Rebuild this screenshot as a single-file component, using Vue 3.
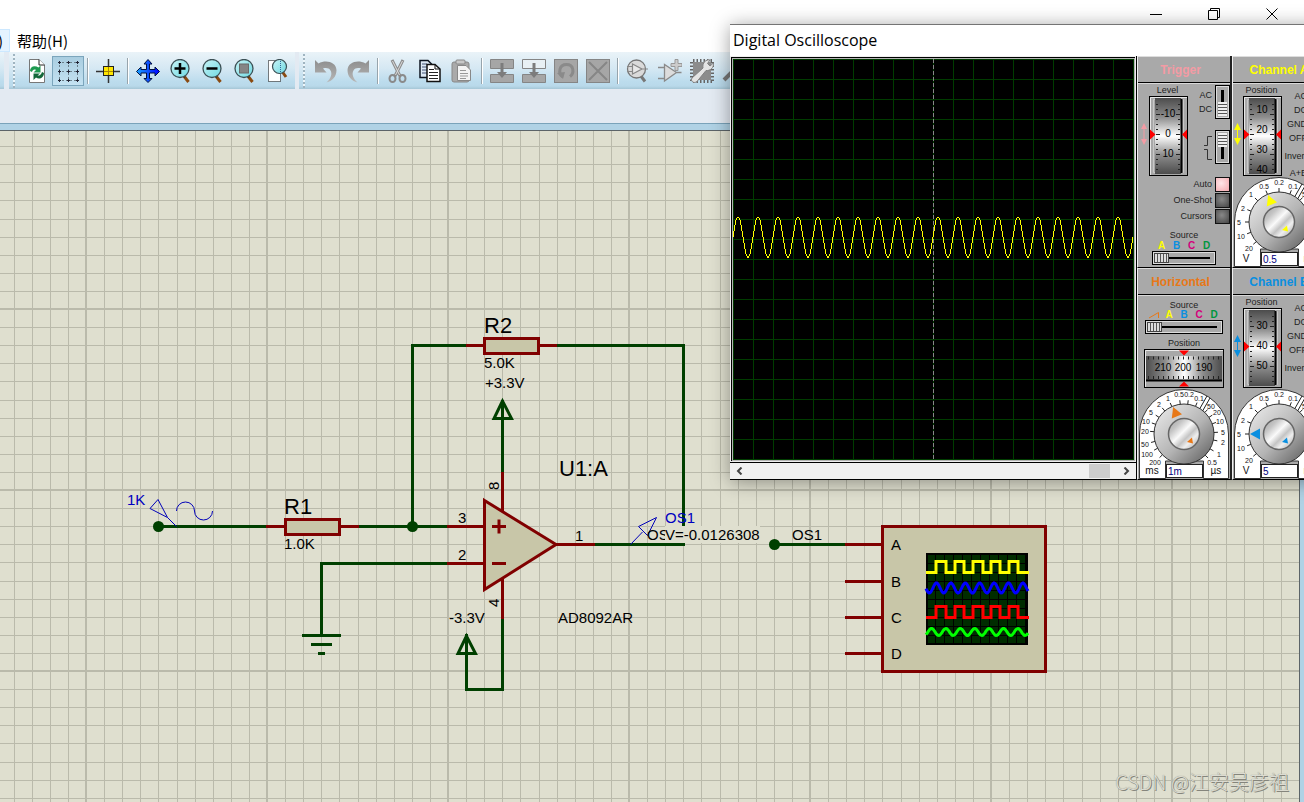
<script setup>
import { ref } from 'vue'

const minors = [19, 37, 55, 73, 92, 110, 128, 146, 164]
const scopeLines = Array.from({ length: 21 }, (_, i) => i * 20)

const wave = (() => {
  const pts = []
  for (let x = 0; x <= 400; x++) {
    pts.push(`${x},${Math.round(178 - 20.5 * Math.sin((x * Math.PI) / 10))}`)
  }
  return pts.join(' ')
})()

const square = (top, base) => {
  const edges = [936, 946, 955, 964, 973, 983, 991, 1000, 1009, 1018]
  let d = `M926 ${base}`
  edges.forEach((x, i) => {
    d += `H${x}V${i % 2 ? base : top}`
  })
  return d + 'H1029'
}
const ripple = (start, mid, amp) => {
  const pts = []
  for (let x = 926; x <= 1028; x++) {
    pts.push(`${x},${(mid - amp * Math.cos(((x - start) * 2 * Math.PI) / 14.4)).toFixed(1)}`)
  }
  return pts.join(' ')
}

const withTick = (list) =>
  list.map(([text, x, y]) => {
    const a = Math.atan2(y - 45, x - 45)
    return {
      text, x, y,
      x1: 45 + 30 * Math.cos(a), y1: 45 + 30 * Math.sin(a),
      x2: 45 + 34 * Math.cos(a), y2: 45 + 34 * Math.sin(a)
    }
  })
const timeScale = withTick([
  ['200', 16, 73], ['100', 8, 65], ['50', 6, 55], ['20', 6, 42], ['10', 7, 32], ['5', 12, 23],
  ['2', 20, 15], ['1', 29, 9], ['0.5', 40, 5], ['0.2', 50, 5], ['0.1', 60, 9], ['50', 72, 17],
  ['20', 78, 23], ['10', 81, 32], ['5', 84, 43], ['2', 84, 53], ['1', 80, 65], ['0.5', 73, 73]
])
const voltScale = withTick([
  ['20', 15, 71], ['10', 7, 59], ['5', 5, 45], ['2', 9, 31], ['1', 17, 17], ['0.5', 30, 9],
  ['0.2', 45, 5], ['0.1', 59, 9], ['50', 72, 17], ['20', 79, 27], ['10', 83, 38], ['5', 84, 50], ['2', 81, 63]
])

const channels = ref([
  {
    id: 'A', color: '#ffff00', angle: -22, value: '0.5',
    marks: [['10', 14], ['20', 34], ['30', 54], ['40', 74]],
    modes: ['AC', 'DC', 'GND', 'OFF'], extra: ['Invert', 'A+B']
  },
  {
    id: 'B', color: '#0a8fe0', angle: -90, value: '5',
    marks: [['30', 18], ['40', 38], ['50', 58]],
    modes: ['AC', 'DC', 'GND', 'OFF'], extra: ['Invert']
  }
])
const triggerMarks = [['-10', 18], ['0', 38], ['10', 58]]
const sources = [
  { id: 'A', cls: 'ca' }, { id: 'B', cls: 'cb' }, { id: 'C', cls: 'cc' }, { id: 'D', cls: 'cd' }
]
const timebase = ref('1m')
const trigSource = ref(0)
const horSource = ref(0)
</script>

<template>
  <div class="app">
    <svg class="defs" width="0" height="0" aria-hidden="true">
      <defs>
        <linearGradient id="drumV" x1="0" y1="0" x2="0" y2="1">
          <stop offset="0" stop-color="#4c4c4c" /><stop offset=".25" stop-color="#8c8c8c" />
          <stop offset=".5" stop-color="#fff" /><stop offset=".75" stop-color="#8c8c8c" />
          <stop offset="1" stop-color="#4c4c4c" />
        </linearGradient>
        <linearGradient id="drumH" x1="0" y1="0" x2="1" y2="0">
          <stop offset="0" stop-color="#4c4c4c" /><stop offset=".25" stop-color="#8c8c8c" />
          <stop offset=".5" stop-color="#fff" /><stop offset=".75" stop-color="#8c8c8c" />
          <stop offset="1" stop-color="#4c4c4c" />
        </linearGradient>
        <linearGradient id="knobOuter" x1=".1" y1=".1" x2=".9" y2=".9">
          <stop offset="0" stop-color="#e4e4e4" /><stop offset=".55" stop-color="#b4b4b4" />
          <stop offset="1" stop-color="#6c6c6c" />
        </linearGradient>
        <linearGradient id="knobInner" x1="0" y1="0" x2="1" y2="1">
          <stop offset="0" stop-color="#a0a0a0" /><stop offset=".25" stop-color="#c4c4c4" />
          <stop offset=".45" stop-color="#fafafa" /><stop offset=".6" stop-color="#c4c4c4" />
          <stop offset=".72" stop-color="#efefef" /><stop offset="1" stop-color="#9a9a9a" />
        </linearGradient>
        <linearGradient id="lens" x1="0" y1="0" x2="1" y2="1">
          <stop offset="0" stop-color="#c9f4f6" /><stop offset="1" stop-color="#6fd9e2" />
        </linearGradient>
        <linearGradient id="greyArrow" x1="0" y1="0" x2="0" y2="1">
          <stop offset="0" stop-color="#8d8d8d" /><stop offset="1" stop-color="#b8b8b8" />
        </linearGradient>
        <linearGradient id="panBlue" x1="0" y1="0" x2="1" y2="0">
          <stop offset="0" stop-color="#19a4ff" /><stop offset="1" stop-color="#0000ff" />
        </linearGradient>
      </defs>
      <symbol id="dial" viewBox="0 0 50 80">
        <rect x="11.5" y=".5" width="38" height="79" fill="#a8a8a8" stroke="#000" />
        <path d="M12.5 79V1.500H49" fill="none" stroke="#e8e8e8" />
        <path d="M15.500 76.500V3.500H45.500V76.500Z" fill="none" stroke="#c8c8c8" />
        <rect x="17" y="2" width="26" height="76" fill="url(#drumV)" />
        <path d="M43.500 3V77" stroke="#000" stroke-width="2" />
        <path d="M18 8h2M18 13h2M18 18h4M18 23h2M18 28h2M18 33h2M18 38h4M18 43h2M18 48h2M18 53h2M18 58h4M18 63h2M18 68h2M18 73h2M40 8h2M40 13h2M38 18h4M40 23h2M40 28h2M40 33h2M38 38h4M40 43h2M40 48h2M40 53h2M38 58h4M40 63h2M40 68h2M40 73h2" stroke="#222" shape-rendering="crispEdges" />
        <path d="M12 33.500L17.500 38.500L12 43.500ZM49 33.500L44 38.500L49 43.500Z" fill="#f00" />
      </symbol>
      <symbol id="knob" viewBox="0 0 90 90">
        <path d="M.5 89.500V45A44.500 44.500 0 0 1 89.500 45V89.500H64.500V72H26.500V89.500Z" fill="#fff" stroke="#333" />
        <path d="M68 7L60 21M71 9L63 23" stroke="#222" fill="none" />
        <circle cx="45" cy="45" r="30" fill="url(#knobOuter)" stroke="#333" />
        <circle cx="45" cy="45" r="15.500" fill="url(#knobInner)" stroke="#666" stroke-width="1.500" />
      </symbol>
      <symbol id="glass" viewBox="0 0 24 24">
        <path d="M15.500 16.500L20.500 23" stroke="#8a4a10" stroke-width="3" />
        <path d="M14.500 15.500L17 18.500" stroke="#333" stroke-width="1.500" />
        <circle cx="12" cy="9.500" r="9" fill="url(#lens)" stroke="#3c5055" stroke-width="1.300" />
      </symbol>
    </svg>

    <header class="head">
      <div class="titlebar">
        <button aria-label="Minimize"><svg width="12" height="12"><path d="M0 6.500H12" /></svg></button>
        <button aria-label="Restore"><svg width="12" height="12"><path d="M.5 2.500H9.500V11.500H.5ZM2.500 2.500V.5H11.500V9.500H9.500" /></svg></button>
        <button aria-label="Close"><svg width="12" height="12"><path d="M.5 .5L11.500 11.500M11.500 .5L.5 11.500" /></svg></button>
      </div>
      <nav class="menu">
        <button class="menu-cut">)</button>
        <button class="menu-item">帮助(H)</button>
      </nav>
    </header>

    <div class="toolbars">
      <div class="bar bar-end"></div>
      <div class="bar">
        <i class="grip"></i>
        <button aria-label="Redraw"><svg viewBox="0 0 24 24">
          <path d="M5.500 .5H15L20.500 6V23.500H5.500Z" fill="#fff" stroke="#777" /><path d="M15 .5V6H20.500" fill="#fff" stroke="#222" />
          <path d="M6 12C6 7 11 6 14.500 8.500L16.500 6.500V13.500H9.500L12 11C10 10 8.500 11 8 13Z" fill="#1e9a50" />
          <path d="M20 14C20 19 15 21 12 18.500L9.500 21V14.500H16L13.500 16.500C15 17 17 16 18 13Z" fill="#12683a" />
        </svg></button>
        <button class="on" aria-label="Toggle grid"><svg viewBox="0 0 24 24">
          <path d="M2 3.500H23M2 12.500H23M2 21.500H23M3.500 2V23M12.500 2V23M21.500 2V23" stroke="#6b7f8a" stroke-dasharray="2 2" />
          <path d="M2 3.500h3M11 3.500h3M20 3.500h3M2 12.500h3M11 12.500h3M20 12.500h3M2 21.500h3M11 21.500h3M20 21.500h3M3.500 2v3M12.500 2v3M21.500 2v3M3.500 11v3M12.500 11v3M21.500 11v3M3.500 20v3M12.500 20v3M21.500 20v3" stroke="#223" />
        </svg></button>
        <i class="sep"></i>
        <button aria-label="Origin"><svg viewBox="0 0 24 24">
          <path d="M0 12.500H24M12.500 0V24" stroke="#333" stroke-width="1.500" />
          <rect x="7.500" y="7.500" width="10" height="9" fill="#ffe600" stroke="#222" /><path d="M8 12.500H17M12.500 8V16" stroke="#a80" />
        </svg></button>
        <i class="sep"></i>
        <button aria-label="Pan"><svg viewBox="0 0 24 24">
          <path d="M12 .5L16 5H13.500V10.500H19V8L23.500 12.500L19 17V14H13.500V19.500H16L12 23.500L8 19.500H10.500V14H5V17L.5 12.500L5 8V10.500H10.500V5H8Z" fill="url(#panBlue)" stroke="#001040" stroke-linejoin="round" />
        </svg></button>
        <button aria-label="Zoom in"><svg viewBox="0 0 24 24"><use href="#glass" /><path d="M6.500 9.500H17.500M12 4V15" stroke="#000" stroke-width="2.500" /></svg></button>
        <button aria-label="Zoom out"><svg viewBox="0 0 24 24"><use href="#glass" /><path d="M6.500 9.500H17.500" stroke="#000" stroke-width="2.500" /></svg></button>
        <button aria-label="Zoom to sheet"><svg viewBox="0 0 24 24"><use href="#glass" /><rect x="7.500" y="5" width="9" height="9" fill="#858585" stroke="#6a6a6a" /></svg></button>
        <button class="wide" aria-label="Zoom to area"><svg viewBox="0 0 24 24">
          <rect x="3.500" y="1.500" width="12" height="21" fill="#fff" stroke="#000" stroke-dasharray="1 1" />
          <path d="M17.500 13L21 18" stroke="#8a4a10" stroke-width="3" /><circle cx="14.500" cy="7.500" r="7" fill="url(#lens)" stroke="#3c5055" stroke-width="1.200" />
          <path d="M15.500 2V13" stroke="#369" stroke-dasharray="1 1" />
        </svg></button>
      </div>
      <div class="bar bar-grow">
        <i class="grip"></i>
        <button aria-label="Undo"><svg viewBox="0 0 24 24"><path d="M1 1L4.500 4.500C12 .5 22 3 22.500 11C22.500 18 18 22 12.500 23.500C17 19.500 18.500 15 16.500 11.500C15 9 12 8.500 9 9.500L12.500 13.500H1Z" fill="url(#greyArrow)" /></svg></button>
        <button aria-label="Redo"><svg viewBox="0 0 24 24"><path d="M23 1L19.500 4.500C12 .5 2 3 1.500 11C1.500 18 6 22 11.500 23.500C7 19.500 5.500 15 7.500 11.500C9 9 12 8.500 15 9.500L11.500 13.500H23Z" fill="url(#greyArrow)" /></svg></button>
        <i class="sep"></i>
        <button aria-label="Cut"><svg viewBox="0 0 24 24" fill="none">
          <path d="M6 1L14 17M17 1L9 17" stroke="#8b8b8b" stroke-width="3" /><path d="M6.500 2L13.500 16M16.500 2L9.500 16" stroke="#ddd" />
          <ellipse cx="6.500" cy="19.500" rx="3" ry="3.500" stroke="#8a8a8a" stroke-width="2" /><ellipse cx="16.500" cy="19.500" rx="3" ry="3.500" stroke="#8a8a8a" stroke-width="2" />
        </svg></button>
        <button aria-label="Copy"><svg viewBox="0 0 24 24">
          <path d="M2 1.500H10L14 5.500V18.500H2Z" fill="#dce8f4" stroke="#0c1420" stroke-width="1.500" /><path d="M4 5h5M4 8h5M4 11h5M4 14h5" stroke="#457" />
          <path d="M9 5.500H17L22 10V22.500H9Z" fill="#fff" stroke="#111" stroke-width="1.500" /><path d="M17 5.500V10H22" fill="none" stroke="#111" /><path d="M11 10.500h5M11 13.500h9M11 16.500h9M11 19.500h9" stroke="#222" />
        </svg></button>
        <button aria-label="Paste"><svg viewBox="0 0 24 24">
          <rect x="2" y="3" width="17" height="20" rx="2" fill="#aaa" stroke="#888" /><rect x="6" y="1" width="9" height="4" rx="1" fill="#c8c8c8" stroke="#888" />
          <path d="M7.500 6.500H16L20.500 11V21.500H7.500Z" fill="#f4f4f4" stroke="#888" /><path d="M10 11.500h6M10 14.500h8M10 17h8M10 19.500h6" stroke="#999" />
        </svg></button>
        <i class="sep"></i>
        <button aria-label="Block copy"><svg viewBox="0 0 24 24">
          <path d="M.5 .5H23.500V9.500H.5ZM.5 15.500H23.500V23.500H.5Z" fill="#a6a6a6" stroke="#858585" /><path d="M10.500 4H13.500V13H17L12 19L7 13H10.500Z" fill="#7c7c7c" />
        </svg></button>
        <button aria-label="Block move"><svg viewBox="0 0 24 24">
          <path d="M.5 .5H23.500V9.500H.5Z" fill="#e8f0f4" stroke="#858585" /><path d="M.5 15.500H23.500V23.500H.5Z" fill="#a6a6a6" stroke="#858585" /><path d="M10.500 4H13.500V13H17L12 19L7 13H10.500Z" fill="#7c7c7c" />
        </svg></button>
        <button aria-label="Block rotate"><svg viewBox="0 0 24 24">
          <rect x=".5" y=".5" width="23" height="23" fill="#a6a6a6" stroke="#858585" /><path d="M8.500 18C4 14 5 5.500 12.500 5.500C20 5.500 20.500 14 16 17.500" fill="none" stroke="#8a8a8a" stroke-width="3" /><path d="M3 14L11 13L9 20Z" fill="#8a8a8a" />
        </svg></button>
        <button aria-label="Block delete"><svg viewBox="0 0 24 24">
          <rect x=".5" y=".5" width="23" height="23" fill="#a6a6a6" stroke="#858585" /><path d="M3 3L21 21M21 3L3 21" stroke="#868686" stroke-width="2" />
        </svg></button>
        <i class="sep"></i>
        <button aria-label="Pick parts"><svg viewBox="0 0 24 24">
          <path d="M14.500 16.500L19 22.500" stroke="#777" stroke-width="3" /><circle cx="10.500" cy="10" r="9" fill="#dadada" stroke="#777" stroke-width="1.300" />
          <path d="M6.500 5V15L16 10ZM1 7.500H6.500M1 12.500H6.500M16 10H22" fill="#e8e8e8" stroke="#888" stroke-width="1.200" />
        </svg></button>
        <button aria-label="Make device"><svg viewBox="0 0 24 24">
          <path d="M6.500 5.500V22L18.500 13.500ZM0 8.500H6.500M0 19.500H6.500M18.500 13.500H23.500" fill="#dcdcdc" stroke="#8a8a8a" stroke-width="1.300" />
          <path d="M17 .5H20V4.500H24V7.500H20V11.500H17V7.500H13V4.500H17Z" fill="#ccc" stroke="#999" />
        </svg></button>
        <button aria-label="Packaging tool"><svg viewBox="0 0 24 24">
          <rect x="3" y="3" width="18" height="18" fill="#8c8c8c" /><path d="M3 1.500H22M3 22.500H22M1.500 3V22M22.500 3V22" stroke="#666" stroke-width="3" stroke-dasharray="1.500 2" />
          <path d="M2 19L13 9C12 4 16 0 20 1L17.500 4.500L20 7L23.500 4C24 9 20 12 16 11.500L7 22.500C4 25 0 22 2 19Z" fill="#e4e4e4" stroke="#808080" />
        </svg></button>
        <button aria-label="Decompose"><svg viewBox="0 0 24 24"><path d="M2 21L15 8M12 5L20 1L23 6L17 11Z" fill="#777" stroke="#777" stroke-width="4" /></svg></button>
      </div>
    </div>

    <main class="sheet">
      <svg class="schematic">
        <defs>
          <pattern id="grid" x="85" y="308" width="181" height="181" patternUnits="userSpaceOnUse">
            <rect width="181" height="181" fill="#dfdfcf" />
            <g fill="#babaab">
              <rect v-for="m in minors" :key="'v' + m" :x="m" y="0" width="1" height="181" />
              <rect v-for="m in minors" :key="'h' + m" x="0" :y="m" width="181" height="1" />
              <rect width="2" height="181" /><rect width="181" height="2" />
            </g>
          </pattern>
          <pattern id="tiny" x="926" y="554" width="9" height="9" patternUnits="userSpaceOnUse">
            <rect width="9" height="9" fill="#002c00" /><path d="M.5 0V9M0 .5H9" stroke="#000" />
          </pattern>
        </defs>
        <g transform="translate(0 -131)">
          <rect x="0" y="131" width="100%" height="100%" fill="url(#grid)" />

          <g class="wire">
            <path d="M158 526.500H266M359 526.500H447M412.500 528V345.500H466M557 345.500H683.500V526M595 544.500H685" />
            <path d="M447 563.500H321.500V635M302 635.500H341M311 644.500H332M318 653.500H325" />
            <path d="M502.500 400V472M502.500 401L494 418.500H511.500Z" />
            <path d="M502.500 618V689.500H466.500V634M466.500 636L458 653.500H475.500Z" />
            <path d="M774 544.500H845" />
          </g>
          <g fill="#004000">
            <circle cx="158.500" cy="526.500" r="5.500" /><circle cx="412.500" cy="526.500" r="5.500" /><circle cx="774.500" cy="544.500" r="5.500" />
          </g>
          <g class="part">
            <path d="M266 526.500H285M340 526.500H359M466 345.500H485M539 345.500H557M447 526.500H485M447 563.500H485M556 544.500H595M502.500 472V512M502.500 578V619" />
            <path d="M845 544.500H882M845 581.500H882M845 617.500H882M845 653.500H882" />
            <rect x="285.500" y="519.500" width="54" height="15" /><rect x="484.500" y="338.500" width="54" height="15" />
            <path d="M484.500 500.500L556 544.500L484.500 589.500Z" />
            <path d="M492 526.500H506M499 519.500V533.500M492 563.500H506" />
            <rect x="882.500" y="526.500" width="163" height="145" />
          </g>
          <rect x="927" y="554" width="100" height="90" fill="url(#tiny)" stroke="#000" stroke-width="2" />
          <g class="mini">
            <path :d="square(566.500 - 5, 572.500)" stroke="#ff0" />
            <polyline :points="ripple(936.500, 588, 5)" stroke="#00f" />
            <path :d="square(606.500, 617.500)" stroke="#f00" />
            <polyline :points="ripple(931.500, 632, 3.500)" stroke="#0f0" />
          </g>

          <g class="probe">
            <path d="M158 499.500L150 508.500L167.500 517.500ZM167.500 517.500L176.500 526.500" />
            <path d="M176.500 511A9 9 0 0 1 194.500 511A9 9 0 0 0 212.500 511" />
            <path d="M656.500 517.500L638.500 526.500L647.500 535.500ZM642.500 532L630.500 544.500" />
          </g>
          <g class="big">
            <text x="284" y="514">R1</text><text x="484" y="333">R2</text><text x="559" y="476">U1:A</text>
          </g>
          <g class="small">
            <text x="284" y="549">1.0K</text><text x="484" y="368">5.0K</text><text x="485" y="388">+3.3V</text>
            <text x="449" y="623">-3.3V</text><text x="558" y="623">AD8092AR</text>
            <text x="458" y="523">3</text><text x="458" y="560">2</text><text x="575" y="541">1</text>
            <text transform="translate(499 490) rotate(-90)">8</text><text transform="translate(499 607) rotate(-90)">4</text>
            <text x="792" y="540">OS1</text>
            <text x="891" y="550">A</text><text x="891" y="587">B</text><text x="891" y="623">C</text><text x="891" y="659">D</text>
            <text x="647" y="540">OS</text>
            <rect x="665" y="526" width="95" height="17" fill="#dfdfcf" />
            <text x="665" y="540">V=-0.0126308</text>
            <g class="blue"><text x="127" y="505">1K</text><text x="665" y="523">OS1</text></g>
          </g>
        </g>
      </svg>
      <div class="watermark">CSDN @江安吴彦祖</div>
    </main>

    <section class="scope" aria-label="Digital Oscilloscope">
      <h1>Digital Oscilloscope</h1>
      <div class="scope-body">
        <div class="display">
          <div class="frame">
            <svg class="trace" width="401" height="401" shape-rendering="crispEdges">
              <rect width="401" height="401" fill="#000" />
              <g fill="#003c00">
                <rect v-for="p in scopeLines" :key="'x' + p" :x="p" y="0" width="1" height="401" />
                <rect v-for="p in scopeLines" :key="'y' + p" x="0" :y="p" width="401" height="1" />
              </g>
              <path d="M200.500 0V401" stroke="#888" stroke-dasharray="4 2" />
              <polyline :points="wave" fill="none" stroke="#ff0" />
            </svg>
          </div>
          <div class="scroll">
            <button aria-label="Scroll left"><svg width="8" height="8"><path d="M5.500 .5L2 4L5.500 7.500" /></svg></button>
            <i class="thumb"></i>
            <button aria-label="Scroll right"><svg width="8" height="8"><path d="M2.500 .5L6 4L2.500 7.500" /></svg></button>
          </div>
        </div>

        <div class="panels">
          <article class="panel">
            <h2 class="c-trig">Trigger</h2>
            <div class="body">
              <div class="top">
                <div class="dialcol trig">
                  <span class="cap">Level</span>
                  <svg class="dial" viewBox="0 0 50 80">
                    <use href="#dial" />
                    <path d="M6 27L9 33H6.500V43H9L6 49L3 43H5.500V33H3Z" fill="#f39ba4" />
                    <text v-for="m in triggerMarks" :key="m[0]" x="30" :y="m[1] + 3">{{ m[0] }}</text>
                  </svg>
                </div>
                <div class="switches">
                  <label class="sw"><span>AC<br>DC</span><input type="checkbox"></label>
                  <label class="sw"><svg width="8" height="30" aria-label="Edge"><path d="M0 13.500H3.500V4.500H8M0 17.500H3.500V27.500H8" /></svg><input type="checkbox" checked></label>
                </div>
              </div>
              <label class="push">Auto<input type="checkbox" checked></label>
              <label class="push">One-Shot<input type="checkbox"></label>
              <label class="push">Cursors<input type="checkbox"></label>
              <label class="cap src" for="tsrc">Source</label>
              <div class="letters"><b v-for="s in sources" :key="s.id" :class="s.cls">{{ s.id }}</b></div>
              <input id="tsrc" v-model="trigSource" class="slide" type="range" min="0" max="3">
            </div>
          </article>

          <article v-for="(c, i) in channels" :key="c.id" class="panel channel" :class="'row' + i">
            <h2 :class="i ? 'cb' : 'ca'">Channel {{ c.id }}</h2>
            <div class="body">
              <div class="top">
                <div class="dialcol">
                  <span class="cap">Position</span>
                  <svg class="dial" viewBox="0 0 50 80">
                    <use href="#dial" />
                    <path d="M5.500 27L9 34H6V42H9L5.500 49L2 42H5V34H2Z" :fill="c.color" />
                    <text v-for="m in c.marks" :key="m[0]" x="30" :y="m[1] + 3">{{ m[0] }}</text>
                  </svg>
                </div>
                <div class="modes">
                  <span v-for="m in c.modes" :key="m">{{ m }}</span>
                  <div class="extra"><span v-for="m in c.extra" :key="m">{{ m }}</span></div>
                </div>
              </div>
              <div class="knob">
                <svg viewBox="0 0 90 90">
                  <use href="#knob" />
                  <path v-for="(t, k) in voltScale" :key="'t' + k" :d="`M${t.x1} ${t.y1}L${t.x2} ${t.y2}`" stroke="#222" />
                  <text v-for="(t, k) in voltScale" :key="k" :x="t.x" :y="t.y + 3">{{ t.text }}</text>
                  <path d="M45 16L39.500 26H50.500Z" :fill="c.color" :transform="`rotate(${c.angle} 45 45)`" />
                  <path d="M53 48.500L54 54.500L48 53Z" :fill="c.color" />
                  <text class="unit" x="12" y="85">V</text><text class="unit" x="77" y="85">mV</text>
                </svg>
                <input v-model="c.value" type="text" :aria-label="'Channel ' + c.id + ' scale'">
              </div>
            </div>
          </article>

          <article class="panel horiz">
            <h2 class="c-hor">Horizontal</h2>
            <div class="body">
              <label class="cap tight" for="hsrc">Source</label>
              <div class="letters">
                <svg width="15" height="10" aria-label="Sweep"><path d="M2 8L11.500 2.500V8" fill="none" stroke="#e87818" /></svg>
                <b v-for="s in sources" :key="s.id" :class="s.cls">{{ s.id }}</b>
              </div>
              <input id="hsrc" v-model="horSource" class="slide long" type="range" min="0" max="4">
              <span class="cap pos">Position</span>
              <svg class="hdial" viewBox="0 0 80 39">
                <rect x=".5" y=".5" width="79" height="38" fill="#a8a8a8" stroke="#000" />
                <path d="M1.500 38V1.500H79" fill="none" stroke="#e8e8e8" />
                <rect x="2" y="7" width="76" height="24" fill="url(#drumH)" /><path d="M2 31.500H78" stroke="#000" stroke-width="2" />
                <path d="M4 9H77" stroke="#222" stroke-width="3" stroke-dasharray="1 4" /><path d="M4 28.500H77" stroke="#222" stroke-width="3" stroke-dasharray="1 4" />
                <path d="M35 1.500H45L40 6.500ZM35 37.500H45L40 32.500Z" fill="#f00" />
                <text x="19" y="22">210</text><text x="39" y="22">200</text><text x="60" y="22">190</text>
              </svg>
              <div class="knob">
                <svg viewBox="0 0 90 90">
                  <use href="#knob" />
                  <path v-for="(t, k) in timeScale" :key="'t' + k" :d="`M${t.x1} ${t.y1}L${t.x2} ${t.y2}`" stroke="#222" />
                  <text v-for="(t, k) in timeScale" :key="k" :x="t.x" :y="t.y + 3">{{ t.text }}</text>
                  <path d="M45 16L39.500 26H50.500Z" fill="#e87818" transform="rotate(-22 45 45)" />
                  <path d="M53 48.500L54 54.500L48 53Z" fill="#e87818" />
                  <text class="unit" x="13" y="85">ms</text><text class="unit" x="77" y="85">µs</text>
                </svg>
                <input v-model="timebase" type="text" aria-label="Timebase">
              </div>
            </div>
          </article>
        </div>
      </div>
    </section>
  </div>
</template>

<style>
body {
  margin: 0;
}
</style>

<style scoped>
.app {
  position: relative;
  display: flex;
  flex-direction: column;
  min-height: 100vh;
  overflow: hidden;
  background: #e3eaf2;
  font-family: "Liberation Sans", "Noto Sans CJK SC", sans-serif;
}
.defs { position: absolute; }
button { padding: 0; border: 0; background: none; font: inherit; color: inherit; }
input { box-sizing: border-box; margin: 0; }

.head { background: #fff; }
.titlebar { display: flex; justify-content: flex-end; height: 29px; padding-right: 3px; box-sizing: border-box; }
.titlebar button { width: 58px; height: 28px; }
.titlebar svg { display: block; margin: 0 auto; fill: none; stroke: #000; }
.menu { display: flex; height: 23px; }
.menu-cut { width: 10px; box-sizing: border-box; background: #e5f3ff; border: 1px solid #cce8ff; border-left: 0; text-indent: -2px; overflow: hidden; font: 15px/21px "Noto Sans CJK SC", sans-serif; text-align: left; }
.menu-item { padding: 0 7px; font: 15px/23px "Noto Sans CJK SC", sans-serif; }

.toolbars { display: flex; gap: 4px; height: 37px; }
.bar { display: flex; align-items: center; padding-right: 1px; background: linear-gradient(#eaf3f8, #d5e8f3 45%, #bcdced 80%, #b9d9ea 92%, #a5c6d6); }
.bar-end { width: 4px; padding: 0; margin-right: 1px; }
.bar-grow { flex: 1; overflow: hidden; }
.bar button { flex: none; width: 32px; height: 30px; box-sizing: border-box; }
.bar button.wide { width: 34px; }
.bar button.on { background: linear-gradient(#a9cde0, #c4e2f2); border: 1px solid #7ba5bc; }
.bar button svg { display: block; width: 24px; height: 24px; margin: 0 auto; }
.grip { flex: none; width: 2px; height: 34px; margin: 0 5px 0 4px; background: repeating-linear-gradient(#9fb4c0 0 2px, #eef6fa 2px 4px); }
.sep { flex: none; width: 1px; height: 26px; margin: 0 3px; background: #97a4ac; border-right: 1px solid #fff; }

.sheet {
  position: relative;
  flex: 1;
  display: flex;
  margin-top: 34px;
  padding-right: 4px;
  border-top: 1px solid #7aa3ba;
  background: #b0d2e5;
}
.schematic { flex: 1; display: block; margin-top: 6px; border-top: 1px solid #5c6468; border-right: 1px solid #5c6468; min-width: 0; }
.wire { fill: none; stroke: #004000; stroke-width: 3; }
.part { fill: #c8c6a8; stroke: #800000; stroke-width: 3; }
.mini { fill: none; stroke-width: 3; }
.probe { fill: none; stroke: #0000b8; stroke-width: 1; }
.big { font-size: 22px; }
.small { font-size: 15px; }
.blue { fill: #0000c0; }
.watermark {
  position: absolute;
  right: 15px;
  bottom: 6px;
  font: 300 20px/28px "Noto Sans CJK SC", sans-serif;
  color: #dcdcd2;
  text-shadow: 1px 1px 0 #85857c, 0 0 1px #85857c;
}

.scope {
  position: absolute;
  left: 730px;
  top: 24px;
  box-sizing: border-box;
  background: #fff;
  border-top: 1px solid #747474;
  box-shadow: 0 2px 18px rgba(0, 0, 0, .38);
}
h1 { margin: 0; padding-left: 3px; font: 16px/31px "Open Sans", sans-serif; color: #000; }
.scope-body { display: flex; }
.display { padding: 1px 1px 0; background: #eee; }
.frame { padding: 1px; border: 1px solid #000; border-right: 0; border-bottom: 0; background: #b4b4b4; }
.trace { display: block; }
.scroll { display: flex; align-items: center; height: 16px; margin: 1px -1px 0; border-top: 1px solid #000; border-bottom: 1px solid #000; background: #f0f0f0; }
.scroll button { width: 20px; }
.scroll svg { display: block; margin: 0 auto; fill: none; stroke: #444; stroke-width: 2; }
.thumb { width: 21px; height: 14px; margin-left: auto; margin-right: 6px; background: #cdcdcd; }

.panels { display: grid; grid-template-columns: 95px 95px; border-left: 1px solid #000; }
.panel { box-sizing: border-box; border-left: 1px solid #f0f0f0; border-right: 2px solid #222; border-bottom: 1px solid #000; background: #a9a9a9; }
.channel { grid-column: 2; }
.row0 { grid-row: 1; }
.row1 { grid-row: 2; }
.horiz { grid-column: 1; grid-row: 2; }
h2 { margin: 0; height: 27px; box-sizing: border-box; border-top: 1px solid #ddd; border-bottom: 1px solid #000; font: bold 12px/27px "Liberation Sans", sans-serif; text-align: center; }
.body { display: flex; flex-direction: column; align-items: center; height: 183px; border-top: 1px solid #d8d8d8; font-size: 9px; color: #222; }
.c-trig, .c-hor { padding-right: 7px; }
.c-trig { color: #f39ba4; }
.c-hor { color: #e87818; }
.ca { color: #ff0; }
.cb { color: #0a8fe0; }
.cc { color: #d4007c; }
.cd { color: #009640; }
.top { display: flex; align-self: stretch; height: 92px; }
.dialcol { display: flex; flex-direction: column; width: 50px; margin-left: -1px; }
.dialcol.trig { margin-left: 0; }
.cap { display: block; line-height: 12px; text-align: center; }
.dialcol .cap { padding-left: 9px; }
.dial { display: block; width: 50px; height: 80px; }
.dial text, .hdial text { font-size: 10px; text-anchor: middle; fill: #000; }
.switches { flex: 1; display: flex; flex-direction: column; gap: 11px; padding-top: 1px; }
.sw { display: flex; align-items: center; justify-content: flex-end; gap: 3px; height: 34px; line-height: 14px; text-align: right; }
.sw svg path { fill: none; stroke: #333; }
.sw input {
  appearance: none;
  width: 15px;
  height: 34px;
  border: 1px solid #000;
  outline: 1px solid #ddd;
  outline-offset: -2px;
  background:
    repeating-linear-gradient(#eee 0 2px, #555 2px 3px) center bottom 2px / 9px 14px no-repeat,
    linear-gradient(#000, #000) center / 3px 24px no-repeat #a9a9a9;
}
.sw input:checked {
  background:
    repeating-linear-gradient(#eee 0 2px, #555 2px 3px) center top 2px / 9px 14px no-repeat,
    linear-gradient(#000, #000) center / 3px 24px no-repeat #a9a9a9;
}
.push { display: flex; align-self: stretch; align-items: center; justify-content: flex-end; gap: 3px; height: 16px; }
.push input { appearance: none; width: 15px; height: 15px; border: 1px solid #111; background: radial-gradient(circle at 45% 40%, #888, #444); }
.push input:checked { background: radial-gradient(circle at 40% 40%, #ffe6e8, #f5a8ae); }
.src { margin-top: 5px; }
.tight { margin-top: 4px; line-height: 10px; }
.pos { margin-top: 3px; }
.letters { display: flex; height: 10px; font-size: 10px; line-height: 10px; }
.letters b { width: 15px; text-align: center; }
.letters svg { display: block; }
.slide {
  appearance: none;
  width: 64px;
  height: 14px;
  padding: 1px 4px 1px 1px;
  border: 1px solid #000;
  outline: 1px solid #ddd;
  outline-offset: -2px;
  background: linear-gradient(#000, #000) center / 52px 2px no-repeat #a9a9a9;
}
.slide.long { width: 78px; background-size: 66px 2px; }
.slide::-webkit-slider-thumb {
  appearance: none;
  width: 15px;
  height: 10px;
  border: 1px solid #444;
  background: repeating-linear-gradient(90deg, #ddd 0 2px, #555 2px 3px);
}
.hdial { display: block; width: 80px; height: 39px; }
.body > .knob { margin-top: auto; }
.knob { position: relative; width: 90px; height: 90px; }
.knob svg { display: block; width: 90px; height: 90px; }
.knob text { font-size: 7px; text-anchor: middle; fill: #111; }
.knob text.unit { font-size: 10px; }
.knob input {
  position: absolute;
  left: 27px;
  top: 75px;
  width: 37px;
  height: 14px;
  padding: 0 1px;
  border: 1px solid #222;
  background: #fff;
  color: #000080;
  font: 10px/12px "Liberation Sans", sans-serif;
}
.modes { flex: 1; display: flex; flex-direction: column; padding: 5px 18px 0 0; align-items: flex-end; }
.modes span { line-height: 14px; }
.extra { display: flex; flex-direction: column; align-items: flex-end; padding-top: 3px; }
.extra span { line-height: 17px; }
</style>
